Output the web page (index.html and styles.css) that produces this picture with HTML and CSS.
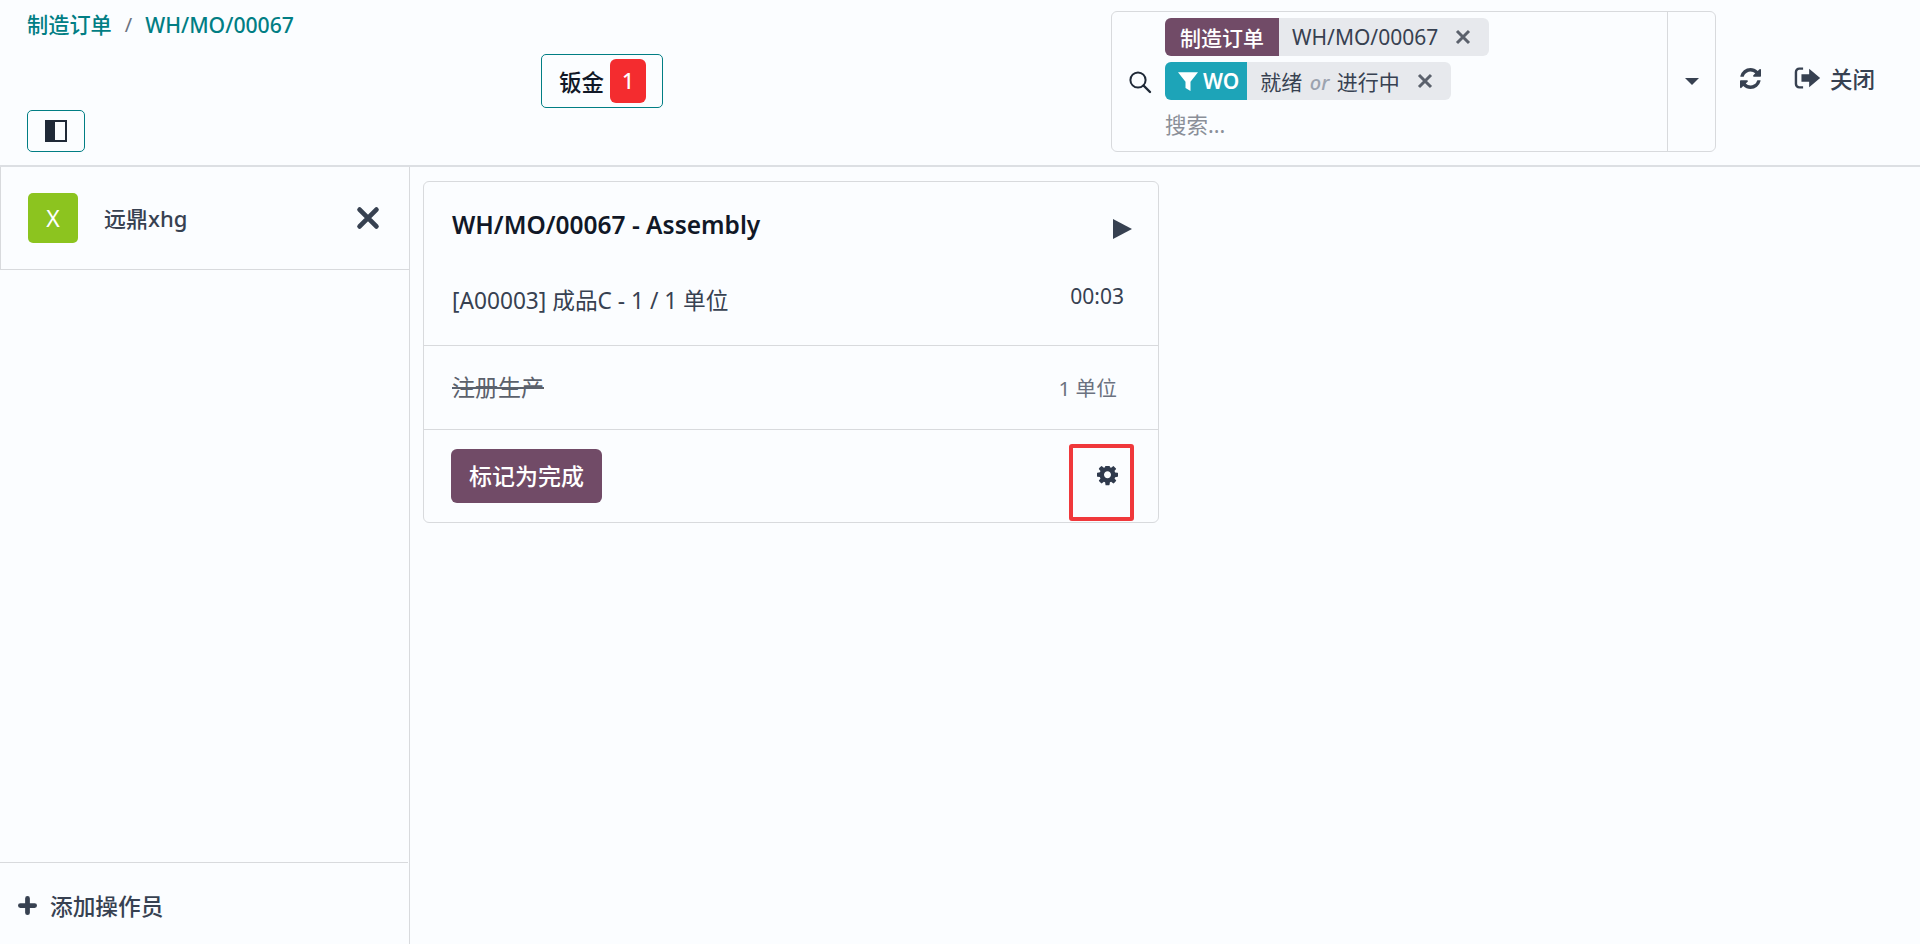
FILE: index.html
```html
<!DOCTYPE html>
<html lang="zh-CN">
<head>
    <meta charset="UTF-8">
    <title>制造订单</title>
    <link rel="stylesheet" href="styles.css">
</head>
<body>
    <div class="topbar">
        <div class="top-left">
            <div class="crumbs">
                <a class="crumb">制造订单</a>
                <span class="crumb-sep">/</span>
                <a class="crumb">WH/MO/00067</a>
            </div>
            <button class="toggle"><span class="toggle-icon"></span></button>
        </div>
        <div class="top-mid">
            <button class="wc-btn">钣金<span class="wc-count">1</span></button>
        </div>
        <div class="searchbox">
            <div class="search-main">
                <svg class="search-icon" viewBox="0 0 24 24"><circle cx="10" cy="10" r="7.6" fill="none" stroke="currentColor" stroke-width="2"/><path d="M15.500 15.500 22 22" stroke="currentColor" stroke-width="2.400" stroke-linecap="round"/></svg>
                <div class="facets">
                    <div class="facet">
                        <span class="facet-label purple">制造订单</span>
                        <span class="facet-val">WH/MO/00067</span>
                        <svg class="facet-x" viewBox="0 0 16 16"><path d="M2 2l12 12M14 2L2 14" stroke="currentColor" stroke-width="3"/></svg>
                    </div>
                    <div class="facet">
                        <span class="facet-label cyan"><svg class="funnel" viewBox="0 0 16 16"><path d="M0 1h16L10 8.500V16L6 13.500V8.500z" fill="currentColor"/></svg>WO</span>
                        <span class="facet-val">就绪 <em>or</em> 进行中</span>
                        <svg class="facet-x" viewBox="0 0 16 16"><path d="M2 2l12 12M14 2L2 14" stroke="currentColor" stroke-width="3"/></svg>
                    </div>
                    <div class="placeholder">搜索...</div>
                </div>
            </div>
            <div class="search-drop"><span class="caret"></span></div>
        </div>
        <div class="top-actions">
            <svg class="refresh" viewBox="0 0 1536 1536"><path fill="currentColor" d="M1511 928q0 5-1 7-64 268-268 434.500t-478 166.500q-146 0-282.500-55t-243.500-157l-129 129q-19 19-45 19t-45-19-19-45v-448q0-26 19-45t45-19h448q26 0 45 19t19 45-19 45l-137 137q71 66 161 102t187 36q134 0 250-65t186-179q11-17 53-117 8-23 30-23h192q13 0 22.500 9.500t9.500 22.500zm25-800v448q0 26-19 45t-45 19h-448q-26 0-45-19t-19-45 19-45l138-138q-148-137-349-137-134 0-250 65t-186 179q-11 17-53 117-8 23-30 23h-199q-13 0-22.500-9.500t-9.500-22.500v-7q65-268 270-434.500t480-166.500q146 0 284 55.500t245 156.500l130-129q19-19 45-19t45 19 19 45z"/></svg>
            <span class="close-btn">
                <svg class="signout" viewBox="0 0 24 20"><path d="M8 1.500H4.500A3 3 0 0 0 1.500 4.500v11a3 3 0 0 0 3 3H8" fill="none" stroke="currentColor" stroke-width="2.200"/><path d="M6.500 6.500h7V1.500L23.500 10l-10 8.500v-5h-7z" fill="currentColor"/></svg>关闭
            </span>
        </div>
    </div>

    <div class="main">
        <div class="sidebar">
            <div class="operator">
                <span class="avatar">X</span>
                <span class="op-name">远鼎xhg</span>
                <svg class="op-x" viewBox="0 0 20 20"><path d="M3 3l14 14M17 3L3 17" stroke="currentColor" stroke-width="4" stroke-linecap="round"/></svg>
            </div>
            <div class="add-op">
                <svg class="plus" viewBox="0 0 20 20"><path d="M10 2.500v15M2.500 10h15" stroke="currentColor" stroke-width="5" stroke-linecap="round"/></svg>添加操作员
            </div>
        </div>

        <div class="content">
            <div class="card">
                <div class="card-head">
                    <div class="title-row">
                        <span class="card-title">WH/MO/00067 - Assembly</span>
                        <svg class="play" viewBox="0 0 19 20"><path d="M0 0l19 10L0 20z" fill="currentColor"/></svg>
                    </div>
                    <div class="info-row">
                        <span class="product">[A00003] 成品C - 1 / 1 单位</span>
                        <span class="timer">00:03</span>
                    </div>
                </div>
                <div class="card-row">
                    <span class="step">注册生产</span>
                    <span class="step-qty">1 单位</span>
                </div>
                <div class="card-foot">
                    <button class="done-btn">标记为完成</button>
                    <svg class="gear" viewBox="0 0 1536 1536"><path fill="currentColor" d="M1024 640q0-106-75-181t-181-75-181 75-75 181 75 181 181 75 181-75 75-181zm512-109v222q0 12-8 23t-20 13l-185 28q-19 54-39 91 35 50 107 138 10 12 10 25t-9 23q-27 37-99 108t-94 71q-12 0-26-9l-138-108q-44 23-91 38-16 136-29 186-7 28-36 28h-222q-14 0-24.500-8.500t-11.500-21.500l-28-184q-49-16-90-37l-141 107q-10 9-25 9-14 0-25-11-126-114-165-168-7-10-7-23 0-12 8-23 15-21 51-66.500t54-70.500q-27-50-41-99l-183-27q-13-2-21-12.500t-8-23.500v-222q0-12 8-23t19-13l186-28q14-46 39-92-40-57-107-138-10-12-10-24 0-10 9-23 26-36 98.500-107.500t94.500-71.500q13 0 26 10l138 107q44-23 91-38 16-136 29-186 7-28 36-28h222q14 0 24.500 8.500t11.500 21.500l28 184q49 16 90 37l142-107q9-9 24-9 13 0 25 10 129 119 165 170 7 8 7 22 0 12-8 23-15 21-51 66.500t-54 70.500q26 50 41 98l183 28q13 2 21 12.500t8 23.500z"/></svg>
                    <div class="redbox"></div>
                </div>
            </div>
        </div>
    </div>
</body>
</html>
```

FILE: styles.css
```css
* {
    margin: 0;
    padding: 0;
    box-sizing: border-box;
}

body {
    height: 944px;
    overflow: hidden;
    display: flex;
    flex-direction: column;
    background-color: #fbfdff;
    color: #374151;
    font-family: "Noto Sans", "Noto Sans CJK SC", sans-serif;
    font-size: 21px;
}

button {
    font-family: inherit;
    background: none;
}

svg {
    display: block;
    flex-shrink: 0;
}

/* top bar */
.topbar {
    height: 167px;
    flex-shrink: 0;
    display: flex;
    border-bottom: 2px solid #dcdfe3;
    padding: 11px 0 0 27px;
}

.top-left {
    width: 484px;
    height: 141px;
    display: flex;
    flex-direction: column;
    justify-content: space-between;
    align-items: flex-start;
}

.crumbs {
    display: flex;
    gap: 13px;
    line-height: 28px;
    font-size: 21.200px;
    font-weight: 500;
    color: #017e84;
}

.crumb-sep {
    color: #6b7280;
    font-size: 20px;
    font-weight: 400;
}

.toggle {
    width: 58px;
    height: 42px;
    border: 1.500px solid #017e84;
    border-radius: 5px;
    display: flex;
    align-items: center;
    justify-content: center;
}

.toggle-icon {
    width: 22px;
    height: 22px;
    border: 2px solid #1f2937;
    border-left-width: 10px;
    background-color: #fbfdff;
}

.top-mid {
    width: 600px;
    padding: 43px 0 0 30px;
}

.wc-btn {
    width: 122px;
    height: 54px;
    border: 1.500px solid #017e84;
    border-radius: 5px;
    display: flex;
    align-items: center;
    gap: 6px;
    padding-left: 17px;
    font-size: 22.500px;
    font-weight: 500;
    color: #111827;
}

.wc-count {
    width: 36px;
    height: 44px;
    border-radius: 6px;
    background-color: #f42c2f;
    color: #fff;
    font-size: 21px;
    font-weight: 500;
    line-height: 44px;
}

.searchbox {
    width: 605px;
    height: 141px;
    display: flex;
    border: 1.500px solid #d8dadd;
    border-radius: 6px;
}

.search-main {
    flex: 1;
    display: flex;
    align-items: center;
    gap: 13px;
    padding-left: 16px;
    border-right: 1.500px solid #d8dadd;
}

.search-icon {
    width: 24px;
    height: 24px;
    color: #1f2937;
}

.facets {
    display: flex;
    flex-direction: column;
    align-items: flex-start;
    gap: 6px;
    align-self: flex-start;
    padding-top: 6px;
}

.facet {
    height: 38px;
    display: flex;
    align-items: center;
    background-color: #e7e9ed;
    border-radius: 6px;
    overflow: hidden;
    font-size: 21px;
}

.facet-label {
    height: 38px;
    display: flex;
    align-items: center;
    padding: 0 15px;
    color: #fff;
    font-size: 21px;
    font-weight: 500;
}

.purple {
    background-color: #714b67;
}

.cyan {
    background-color: #1da4b8;
    padding: 0 8px 0 13px;
    font-weight: 600;
    gap: 5px;
}

.funnel {
    width: 20px;
    height: 20px;
}

.facet-val {
    padding: 0 14px 0 13px;
}

.facet-val em {
    color: #9ca3af;
    font-size: 20px;
    font-weight: 500;
    margin: 0 2px;
}

.facet-x {
    width: 16px;
    height: 16px;
    margin: 0 18px 0 3px;
    color: #5b616c;
}

.placeholder {
    color: #8a8f98;
    font-size: 21.500px;
    line-height: 28px;
    margin-top: 5px;
}

.search-drop {
    width: 47px;
    display: flex;
    align-items: center;
    justify-content: center;
}

.caret {
    border-left: 7px solid transparent;
    border-right: 7px solid transparent;
    border-top: 7px solid #374151;
}

.top-actions {
    display: flex;
    align-items: center;
    height: 134px;
    padding-left: 24px;
    color: #374151;
}

.refresh {
    width: 21px;
    height: 21px;
}

.close-btn {
    display: flex;
    align-items: center;
    gap: 9px;
    margin-left: 33px;
    font-size: 22.500px;
    font-weight: 500;
}

.signout {
    width: 27px;
    height: 22px;
}

/* sidebar and content */
.main {
    flex: 1;
    display: flex;
    min-height: 0;
}

.sidebar {
    width: 410px;
    display: flex;
    flex-direction: column;
    justify-content: space-between;
    border-right: 1.500px solid #d8dadd;
}

.operator {
    height: 103px;
    display: flex;
    align-items: center;
    padding: 0 29px 0 27px;
    border-left: 1.500px solid #d8dadd;
    border-bottom: 1.500px solid #d8dadd;
}

.avatar {
    width: 50px;
    height: 50px;
    border-radius: 5px;
    background-color: #8cc41f;
    color: #fff;
    font-size: 23px;
    line-height: 50px;
    text-align: center;
}

.op-name {
    flex: 1;
    margin: 0 0 3px 26px;
    font-size: 22px;
    font-weight: 500;
}

.op-x {
    width: 24px;
    height: 24px;
}

.add-op {
    height: 82px;
    display: flex;
    align-items: center;
    gap: 13px;
    padding: 4px 0 0 18px;
    margin-right: 1px;
    border-top: 1.500px solid #d8dadd;
    font-size: 22.700px;
    font-weight: 500;
}

.plus {
    width: 19px;
    height: 19px;
}

.content {
    flex: 1;
    padding: 14px 0 0 13px;
}

.card {
    width: 736px;
    height: 342px;
    display: flex;
    flex-direction: column;
    border: 1.500px solid #d8dadd;
    border-radius: 6px;
}

.card-head {
    height: 164px;
    padding: 26px 26px 0 28px;
    border-bottom: 1.500px solid #d8dadd;
}

.title-row {
    display: flex;
    align-items: center;
    justify-content: space-between;
    height: 33px;
}

.card-title {
    font-size: 24.500px;
    font-weight: 600;
    color: #111827;
}

.play {
    width: 19px;
    height: 20px;
    margin-top: 8px;
}

.info-row {
    display: flex;
    justify-content: space-between;
    margin-top: 41px;
    padding-right: 8px;
}

.product {
    font-size: 22.700px;
    margin-top: 1px;
}

.timer {
    font-size: 21px;
}

.card-row {
    height: 84px;
    display: flex;
    align-items: center;
    justify-content: space-between;
    padding: 0 41px 0 28px;
    border-bottom: 1.500px solid #d8dadd;
}

.step {
    color: #5b616c;
    font-size: 23px;
    margin-bottom: 4px;
    text-decoration: line-through;
}

.step-qty {
    color: #6b7280;
    font-size: 20.700px;
    margin-bottom: 2px;
}

.card-foot {
    flex: 1;
    position: relative;
    display: flex;
    justify-content: space-between;
    padding: 19px 40px 0 27px;
}

.done-btn {
    width: 151px;
    height: 54px;
    padding-bottom: 3px;
    border: none;
    border-radius: 6px;
    background-color: #714b67;
    color: #fff;
    font-size: 23px;
    font-weight: 500;
}

.gear {
    width: 21px;
    height: 21px;
    margin-top: 17px;
    color: #2f3a4d;
}

/* red annotation drawn over the screenshot */
.redbox {
    position: absolute;
    left: 645px;
    top: 14px;
    width: 65px;
    height: 77px;
    border: 4px solid #f0383b;
    border-radius: 3px;
}
```
